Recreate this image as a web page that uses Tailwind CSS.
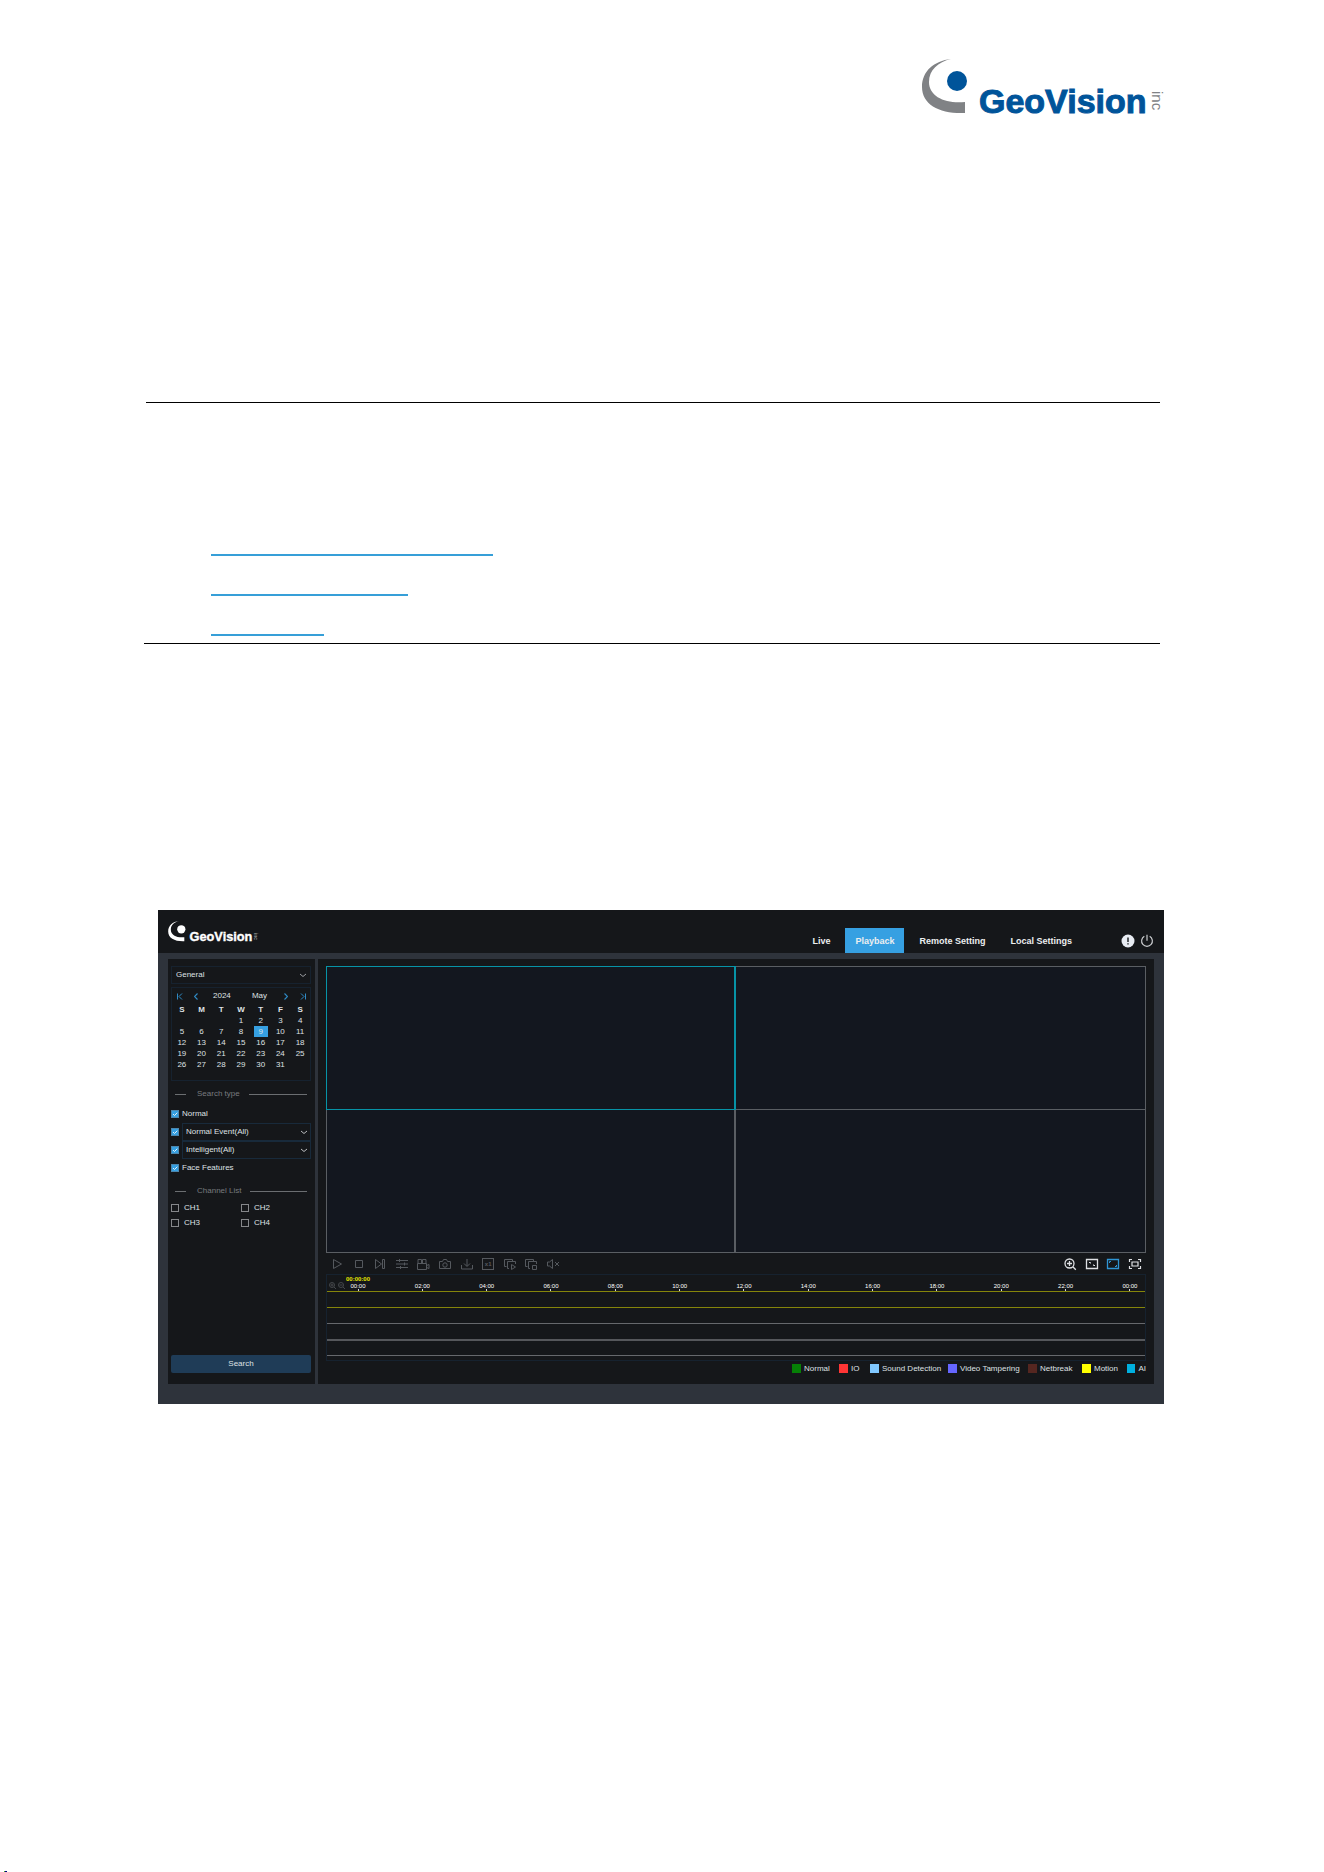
<!DOCTYPE html>
<html lang="en">

<head>
    <meta charset="UTF-8" />
    <meta name="viewport" content="width=device-width, initial-scale=1.0" />
    <title>GeoVision Playback</title>
    <script src="https://cdn.jsdelivr.net/npm/@tailwindcss/browser@4"></script>
</head>

<body class="bg-white min-h-screen flex flex-col font-['Liberation_Sans',Arial,sans-serif]">
    <!-- Page logo -->
    <header class="flex justify-end pt-[59px] pr-[163px]">
        <svg class="w-[239px] h-[56px] overflow-visible" viewBox="0 0 239 56" role="img" aria-label="GeoVision inc">
            <path fill="#808285" d="M29 0C12 2 0 12 0 28C0 46 18 55 43 54V43C24 45 7 38 7 23C7 11 16 3 29 0Z" />
            <circle cx="35" cy="22" r="10" fill="#00549a" />
            <text x="57" y="54" fill="#00549a" stroke="#00549a" font-size="34" font-weight="700"
                font-family="'Liberation Sans',Arial,sans-serif">GeoVision</text>
            <text transform="translate(230 32) rotate(90)" fill="#808285" font-size="15"
                font-family="'Liberation Sans',Arial,sans-serif">inc</text>
        </svg>
    </header>

    <!-- Related topics -->
    <nav class="mt-[287px] ml-[144px] mr-[164px] h-[242px] border-b border-black" aria-label="Related topics">
        <div class="ml-[2px] border-t border-black"></div>
        <div class="ml-[67px] pt-[113px] flex flex-col items-start">
            <a href="#playback" aria-label="Playback" class="block w-[282px] h-10 border-b-2 border-[#369fd8]"></a>
            <a href="#search" aria-label="Search" class="block w-[197px] h-10 border-b-2 border-[#369fd8]"></a>
            <a href="#export" aria-label="Export" class="block w-[113px] h-10 border-b-2 border-[#369fd8]"></a>
        </div>
    </nav>

    <!-- Web client -->
    <main class="mt-[266px] ml-[158px] mr-[160px] bg-[#2e333b] text-[8px] leading-[10px] text-[#dfe1e4]">
        <div class="h-[43px] bg-[#15171a] flex items-end">
            <svg class="ml-[10px] mb-[11px] w-[90px] h-[21px] overflow-visible" viewBox="0 0 239 56" role="img"
                aria-label="GeoVision inc">
                <path fill="#fff" d="M29 0C12 2 0 12 0 28C0 46 18 55 43 54V43C24 45 7 38 7 23C7 11 16 3 29 0Z" />
                <circle cx="35" cy="22" r="11" fill="#fff" />
                <text x="57" y="54" fill="#fff" stroke="#fff" font-size="34" font-weight="700"
                    font-family="'Liberation Sans',Arial,sans-serif">GeoVision</text>
                <text transform="translate(230 32) rotate(90)" fill="#b5b7ba" font-size="15"
                    font-family="'Liberation Sans',Arial,sans-serif">inc</text>
            </svg>
            <nav class="ml-auto flex gap-[5px] text-[9px] font-bold text-[#eceef0]">
                <a href="#live" class="h-[25px] px-[10px] flex items-center">Live</a>
                <a href="#playback" class="h-[25px] px-[10px] flex items-center bg-[#36a0e2]">Playback</a>
                <a href="#remote" class="h-[25px] px-[10px] flex items-center">Remote Setting</a>
                <a href="#local" class="h-[25px] px-[10px] flex items-center">Local Settings</a>
            </nav>
            <div class="flex gap-[5px] ml-[39px] mr-[10px] mb-[5px]">
                <button aria-label="Information"><svg class="w-[14px] h-[14px]" viewBox="0 0 14 14">
                        <circle cx="7" cy="7" r="6.500" fill="#e8ecf3" />
                        <path d="M7 3.500v4.500M7 9.200v1.400" stroke="#15171a" stroke-width="1.400" />
                    </svg></button>
                <button aria-label="Log out"><svg class="w-[14px] h-[14px]" viewBox="0 0 14 14" fill="none"
                        stroke="#c9cbce" stroke-width="1.200">
                        <path d="M4.300 2.300a5.400 5.400 0 1 0 5.400 0M7 .8v6" />
                    </svg></button>
            </div>
        </div>

        <div class="flex gap-[3px] pt-[6px] px-[10px] pb-[20px]">
            <!-- Search panel -->
            <aside class="w-[147px] shrink-0 flex flex-col bg-[#15171a] pt-[7px] pb-[11px] pl-[3px] pr-[4px]">
                <div class="relative">
                    <select aria-label="Search mode"
                        class="block w-full h-[18px] appearance-none border border-[#16222f] pl-1">
                        <option>General</option>
                    </select>
                    <svg class="absolute right-[5px] top-[7px] w-[6px] h-[5px] pointer-events-none" viewBox="0 0 6 5"
                        fill="none" stroke="#9a9da1">
                        <path d="M0 1l3 2.500L6 1" />
                    </svg>
                </div>

                <div class="mt-[3px] h-[94px] border border-[#16222f]">
                    <div class="h-[16px] pl-[5px] pr-[4px] flex items-center">
                        <button aria-label="Previous year"><svg class="w-[6px] h-[7px]" viewBox="0 0 6 7" fill="none"
                                stroke="#2f8ac4">
                                <path d="M.5 .5v6M5 .5l-3 3 3 3" />
                            </svg></button>
                        <button aria-label="Previous month" class="ml-[11px]"><svg class="w-[4px] h-[7px]"
                                viewBox="0 0 4 7" fill="none" stroke="#2f8ac4" stroke-width="1.200">
                                <path d="M3.500 .5l-3 3 3 3" />
                            </svg></button>
                        <span class="ml-[15px]">2024</span>
                        <span class="ml-auto">May</span>
                        <button aria-label="Next month" class="ml-[17px]"><svg class="w-[4px] h-[7px]"
                                viewBox="0 0 4 7" fill="none" stroke="#2f8ac4" stroke-width="1.200">
                                <path d="M.5 .5l3 3-3 3" />
                            </svg></button>
                        <button aria-label="Next year" class="ml-[12px]"><svg class="w-[6px] h-[7px]" viewBox="0 0 6 7"
                                fill="none" stroke="#2f8ac4">
                                <path d="M5.500 .5v6M1 .5l3 3-3 3" />
                            </svg></button>
                    </div>
                    <table class="w-full table-fixed text-center">
                        <thead>
                            <tr class="h-[11px]">
                                <th>S</th><th>M</th><th>T</th><th>W</th><th>T</th><th>F</th><th>S</th>
                            </tr>
                        </thead>
                        <tbody>
                            <tr class="h-[11px]">
                                <td></td><td></td><td></td><td>1</td><td>2</td><td>3</td><td>4</td>
                            </tr>
                            <tr class="h-[11px]">
                                <td>5</td><td>6</td><td>7</td><td>8</td>
                                <td><span class="block mx-[3px] h-[11px] leading-[11px] bg-[#36a0e2]">9</span></td>
                                <td>10</td><td>11</td>
                            </tr>
                            <tr class="h-[11px]">
                                <td>12</td><td>13</td><td>14</td><td>15</td><td>16</td><td>17</td><td>18</td>
                            </tr>
                            <tr class="h-[11px]">
                                <td>19</td><td>20</td><td>21</td><td>22</td><td>23</td><td>24</td><td>25</td>
                            </tr>
                            <tr class="h-[11px]">
                                <td>26</td><td>27</td><td>28</td><td>29</td><td>30</td><td>31</td><td></td>
                            </tr>
                        </tbody>
                    </table>
                </div>

                <div class="mt-1 h-[18px] px-1 flex items-center text-[#787b7f]">
                    <span class="w-[11px] h-px bg-[#6b6e71]"></span>
                    <h2 class="ml-[11px] mr-[9px]">Search type</h2>
                    <span class="grow h-px bg-[#6b6e71]"></span>
                </div>

                <div class="mt-[2px] h-[18px] flex items-center gap-[3px]">
                    <span class="relative size-2">
                        <input type="checkbox" id="normal" checked class="peer block appearance-none size-2 border border-[#4b86ad] checked:bg-[#36a0e2]" />
                        <svg class="absolute inset-0 size-2 pointer-events-none hidden peer-checked:block" viewBox="0 0 8 8" fill="none" stroke="#e3f1fa">
                            <path d="M2 4l1.500 1.500L6.300 2.700" />
                        </svg>
                    </span>
                    <label for="normal">Normal</label>
                </div>
                <div class="h-[18px] flex items-center gap-[3px]">
                    <span class="relative size-2">
                        <input type="checkbox" aria-label="Normal events" checked class="peer block appearance-none size-2 border border-[#4b86ad] checked:bg-[#36a0e2]" />
                        <svg class="absolute inset-0 size-2 pointer-events-none hidden peer-checked:block" viewBox="0 0 8 8" fill="none" stroke="#e3f1fa">
                            <path d="M2 4l1.500 1.500L6.300 2.700" />
                        </svg>
                    </span>
                    <div class="relative grow">
                        <select aria-label="Normal event types"
                            class="block w-full h-[18px] appearance-none border border-[#182a3b] pl-[3px]">
                            <option>Normal Event(All)</option>
                        </select>
                        <svg class="absolute right-[4px] top-[7px] w-[6px] h-[5px] pointer-events-none"
                            viewBox="0 0 6 5" fill="none" stroke="#b9bbbe">
                            <path d="M0 1l3 2.500L6 1" />
                        </svg>
                    </div>
                </div>
                <div class="h-[18px] flex items-center gap-[3px]">
                    <span class="relative size-2">
                        <input type="checkbox" aria-label="Intelligent events" checked class="peer block appearance-none size-2 border border-[#4b86ad] checked:bg-[#36a0e2]" />
                        <svg class="absolute inset-0 size-2 pointer-events-none hidden peer-checked:block" viewBox="0 0 8 8" fill="none" stroke="#e3f1fa">
                            <path d="M2 4l1.500 1.500L6.300 2.700" />
                        </svg>
                    </span>
                    <div class="relative grow">
                        <select aria-label="Intelligent event types"
                            class="block w-full h-[18px] appearance-none border border-[#182a3b] pl-[3px]">
                            <option>Intelligent(All)</option>
                        </select>
                        <svg class="absolute right-[4px] top-[7px] w-[6px] h-[5px] pointer-events-none"
                            viewBox="0 0 6 5" fill="none" stroke="#b9bbbe">
                            <path d="M0 1l3 2.500L6 1" />
                        </svg>
                    </div>
                </div>
                <div class="h-[18px] flex items-center gap-[3px]">
                    <span class="relative size-2">
                        <input type="checkbox" id="face" checked class="peer block appearance-none size-2 border border-[#4b86ad] checked:bg-[#36a0e2]" />
                        <svg class="absolute inset-0 size-2 pointer-events-none hidden peer-checked:block" viewBox="0 0 8 8" fill="none" stroke="#e3f1fa">
                            <path d="M2 4l1.500 1.500L6.300 2.700" />
                        </svg>
                    </span>
                    <label for="face">Face Features</label>
                </div>

                <div class="mt-[5px] h-[18px] px-1 flex items-center text-[#787b7f]">
                    <span class="w-[11px] h-px bg-[#6b6e71]"></span>
                    <h2 class="ml-[11px] mr-[9px]">Channel List</h2>
                    <span class="grow h-px bg-[#6b6e71]"></span>
                </div>
                <div class="grid grid-cols-2">
                    <label class="h-[15px] flex items-center gap-[5px]"><input type="checkbox"
                            class="appearance-none size-2 border border-[#85878a]" />CH1</label>
                    <label class="h-[15px] flex items-center gap-[5px]"><input type="checkbox"
                            class="appearance-none size-2 border border-[#85878a]" />CH2</label>
                    <label class="h-[15px] flex items-center gap-[5px]"><input type="checkbox"
                            class="appearance-none size-2 border border-[#85878a]" />CH3</label>
                    <label class="h-[15px] flex items-center gap-[5px]"><input type="checkbox"
                            class="appearance-none size-2 border border-[#85878a]" />CH4</label>
                </div>

                <button class="mt-auto h-[18px] rounded-[2px] bg-[#1f3c57]">Search</button>
            </aside>

            <!-- Player -->
            <section class="grow min-w-0 bg-[#15171a] pt-[7px] px-2">
                <div class="grid grid-cols-2 bg-[#13171f]">
                    <div class="h-[144px] border border-r-2 border-[#0793a6]"></div>
                    <div class="h-[144px] border border-l-0 border-[#5a5e63]"></div>
                    <div class="h-[143px] border border-t-0 border-r-2 border-[#5a5e63]"></div>
                    <div class="h-[143px] border-r border-b border-[#5a5e63]"></div>
                </div>

                <div class="h-[21px] px-[4px] flex items-center justify-between">
                    <div class="w-[230px] flex justify-between text-[#55595e]">
                        <button aria-label="Play"><svg class="size-[14px]" viewBox="0 0 14 14" fill="none"
                                stroke="currentColor">
                                <path d="M3.500 2.500v9l8-4.500z" />
                            </svg></button>
                        <button aria-label="Stop"><svg class="size-[14px]" viewBox="0 0 14 14" fill="none"
                                stroke="currentColor">
                                <path d="M3.500 3.500h7v7h-7z" />
                            </svg></button>
                        <button aria-label="Next frame"><svg class="size-[14px]" viewBox="0 0 14 14" fill="none"
                                stroke="currentColor">
                                <path d="M2.500 2.500v9l6-4.500zM9.500 2.500h2v9h-2z" />
                            </svg></button>
                        <button aria-label="Stream"><svg class="size-[14px]" viewBox="0 0 14 14" fill="none"
                                stroke="currentColor">
                                <path d="M1 3.500h12M1 7h12M1 10.500h12M4.500 2v3M9.500 5.500v3M5.500 9v3" />
                            </svg></button>
                        <button aria-label="Record"><svg class="size-[14px]" viewBox="0 0 14 14" fill="none"
                                stroke="currentColor">
                                <path d="M1.500 6.500h9v6h-9zM10.500 8.500l2.500-1v4l-2.500-1M2 2.500h3.500v4H2zM6.500 2.500H10v4H6.500z" />
                            </svg></button>
                        <button aria-label="Snapshot"><svg class="size-[14px]" viewBox="0 0 14 14" fill="none"
                                stroke="currentColor">
                                <path d="M1.500 4.500h3l1-2h3l1 2h3v7h-11z" />
                                <circle cx="7" cy="8" r="2.200" />
                            </svg></button>
                        <button aria-label="Download"><svg class="size-[14px]" viewBox="0 0 14 14" fill="none"
                                stroke="currentColor">
                                <path d="M1.500 8v4h11V8M7 2v7M4 6.500l3 3 3-3" />
                            </svg></button>
                        <button aria-label="Speed"
                            class="w-[12px] h-[12px] m-px border border-[#55595e] text-[6px] leading-[10px] font-bold">x1</button>
                        <button aria-label="Play all"><svg class="size-[14px]" viewBox="0 0 14 14" fill="none"
                                stroke="currentColor">
                                <path d="M3.500 9.500h-2v-7h8v2M6 11.500H4.500v-7h8V7M8.500 7.500v5l4-2.500z" />
                            </svg></button>
                        <button aria-label="Stop all"><svg class="size-[14px]" viewBox="0 0 14 14" fill="none"
                                stroke="currentColor">
                                <path d="M3.500 9.500h-2v-7h8v2M6 11.500H4.500v-7h8V7M8.500 8.500h4v4h-4z" />
                            </svg></button>
                        <button aria-label="Mute"><svg class="size-[14px]" viewBox="0 0 14 14" fill="none"
                                stroke="currentColor">
                                <path d="M1.500 5h2l3-2.500v9L3.500 9h-2zM9 5l4 4M13 5L9 9" />
                            </svg></button>
                    </div>
                    <div class="w-[79px] flex justify-between text-[#dfe1e4]">
                        <button aria-label="Zoom"><svg class="size-[14px]" viewBox="0 0 14 14" fill="none"
                                stroke="currentColor" stroke-width="1.300">
                                <circle cx="6.500" cy="6.500" r="4.500" />
                                <path d="M9.800 9.800l3 3M4 6.500h5M6.500 4v5" />
                            </svg></button>
                        <button aria-label="Original ratio"><svg class="size-[14px]" viewBox="0 0 14 14" fill="none"
                                stroke="currentColor" stroke-width="1.300">
                                <path d="M1.500 2.500h11v9h-11z" />
                                <path d="M4 5.500h1.500v1M10 8.500H8.500v-1" stroke-width="1" />
                            </svg></button>
                        <button aria-label="Stretch" class="text-[#2f95d4]"><svg class="size-[14px]" viewBox="0 0 14 14"
                                fill="none" stroke="currentColor" stroke-width="1.300">
                                <path d="M1.500 2.500h11v9h-11z" />
                                <path d="M3.500 6V4.500H5M10.500 8v1.500H9" stroke-width="1" />
                            </svg></button>
                        <button aria-label="Full screen"><svg class="size-[14px]" viewBox="0 0 14 14" fill="none"
                                stroke="currentColor" stroke-width="1.200">
                                <path d="M1.500 5V2.500H4M10 2.500h2.500V5M12.500 9v2.500H10M4 11.500H1.500V9M4 5h6v4H4z" />
                            </svg></button>
                    </div>
                </div>

                <!-- Timeline -->
                <div class="relative h-[87px] border border-[#16222f] text-[6px]">
                    <div class="absolute left-[2px] top-[7px] flex gap-[2px] text-[#44474b]">
                        <button aria-label="Zoom in timeline"><svg class="size-[7px]" viewBox="0 0 7 7" fill="none"
                                stroke="currentColor">
                                <circle cx="3" cy="3" r="2.500" />
                                <path d="M5 5l2 2M1.500 3h3M3 1.500v3" />
                            </svg></button>
                        <button aria-label="Zoom out timeline"><svg class="size-[7px]" viewBox="0 0 7 7" fill="none"
                                stroke="currentColor">
                                <circle cx="3" cy="3" r="2.500" />
                                <path d="M5 5l2 2M1.500 3h3" />
                            </svg></button>
                    </div>
                    <p class="h-2 leading-[8px] pl-[19px] font-bold text-[#e6e600]">00:00:00</p>
                    <div id="hours" class="h-2 pl-[19px] pr-[3px] flex justify-between leading-[6px] text-white"></div>
                    <div class="h-4 border-t border-[#85850a]"></div>
                    <div class="h-4 border-t border-[#85850a]"></div>
                    <div class="h-4 border-t border-[#66686c]"></div>
                    <div class="h-4 border-t-2 border-[#55575b]"></div>
                    <div class="border-t border-[#66686c]"></div>
                </div>

                <ul class="h-[23px] flex justify-end pt-[3px]">
                    <li class="w-[47px] flex gap-[3px]"><i class="size-[9px] bg-[#068006]"></i>Normal</li>
                    <li class="w-[31px] flex gap-[3px]"><i class="size-[9px] bg-[#ff3535]"></i>IO</li>
                    <li class="w-[78px] flex gap-[3px] whitespace-nowrap"><i class="size-[9px] bg-[#80c8ff]"></i>Sound Detection</li>
                    <li class="w-[80px] flex gap-[3px] whitespace-nowrap"><i class="size-[9px] bg-[#6666ff]"></i>Video Tampering</li>
                    <li class="w-[54px] flex gap-[3px]"><i class="size-[9px] bg-[#552620]"></i>Netbreak</li>
                    <li class="w-[45px] flex gap-[3px]"><i class="size-[9px] bg-[#ffff00]"></i>Motion</li>
                    <li class="w-[19px] flex gap-[3px]"><i class="size-[9px] bg-[#00b0e0]"></i>AI</li>
                </ul>
            </section>
        </div>
    </main>

    <footer class="mt-auto pl-[4px] flex">
        <span class="w-px h-px bg-[#3fae29]"></span>
        <span class="w-[2px] h-px bg-[#000080]"></span>
    </footer>

    <script>
        const hours = document.getElementById('hours');
        const labels = ['00:00', '02:00', '04:00', '06:00', '08:00', '10:00', '12:00', '14:00', '16:00', '18:00', '20:00', '22:00', '00:00'];

        hours.innerHTML = labels
            .map(label => `
              <div class="w-6 flex flex-col items-center">
                <span>${label}</span>
                <span class="w-px h-[2px] bg-[#d5d7da]"></span>
              </div>`)
            .join('');
    </script>
</body>

</html>
